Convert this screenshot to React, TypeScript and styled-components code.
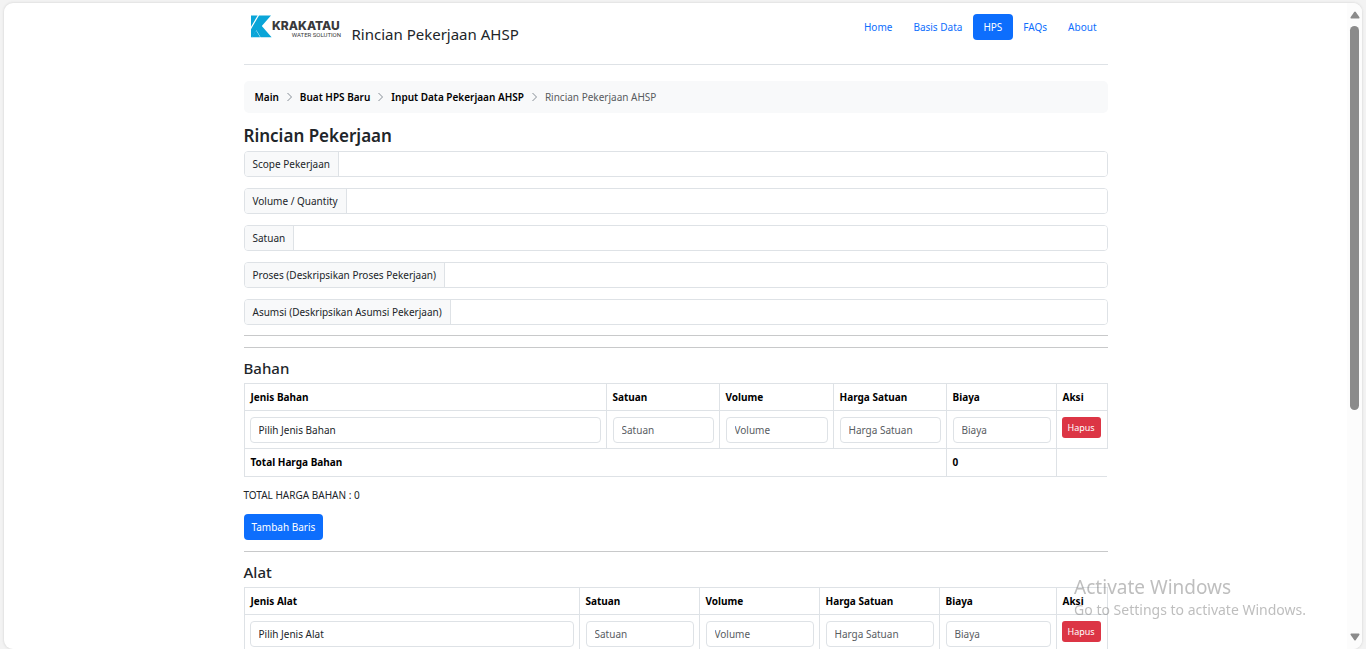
import React from "react";
import styled, { createGlobalStyle } from "styled-components";

const GlobalStyle = createGlobalStyle`
  *, *::before, *::after { box-sizing: border-box; }
  body {
    margin: 0;
    background: #f3f3f3;
    color: #212529;
    font-family: "Noto Sans", "Open Sans", sans-serif;
    font-size: 10px;
    line-height: 16px;
  }
  button, input, select { font: inherit; color: inherit; }
`;

const Frame = styled.div`
  display: flex;
  height: 100vh;
  padding: 3px 4px 0;
`;

const Viewport = styled.div`
  display: flex;
  flex: 1;
  overflow: hidden;
  background: #fff;
  border-radius: 9px;
  box-shadow: 0 0 2px 1px #e2e2e2;
`;

const Page = styled.div`
  flex: 1;
  min-width: 0;
  overflow: hidden;
`;

const Container = styled.div`
  max-width: 864px;
  margin: 0 auto;
`;

const ScrollTrack = styled.div`
  display: flex;
  flex-direction: column;
  align-items: center;
  gap: 7px;
  width: 15px;
  padding: 8px 0;
  background: #fcfcfc;
`;

const ScrollThumb = styled.div`
  width: 9px;
  height: 61%;
  margin-bottom: auto;
  border-radius: 5px;
  background: #8b8b8b;
`;

const Header = styled.header`
  display: flex;
  justify-content: space-between;
  align-items: flex-start;
  height: 62px;
  padding-top: 11px;
  border-bottom: 1px solid #dee2e6;
`;

const Brand = styled.a`
  display: flex;
  align-items: flex-start;
  gap: 10px;
  padding-left: 6px;
  color: #212529;
  text-decoration: none;
`;

const BrandTitle = styled.span`
  padding-top: 10px;
  font-size: 15px;
  line-height: 20px;
`;

const Nav = styled.nav`
  display: flex;
`;

const NavLink = styled.a<{ $active?: boolean }>`
  padding: 5px 11px 5px 10px;
  border-radius: 4px;
  background: ${(p) => (p.$active ? "#0d6efd" : "transparent")};
  color: ${(p) => (p.$active ? "#fff" : "#0d6efd")};
  text-decoration: none;
`;

const Breadcrumb = styled.nav`
  display: flex;
  align-items: center;
  gap: 8px;
  height: 32px;
  margin-top: 16px;
  padding: 0 11px;
  border-radius: 5px;
  background: #f8f9fa;
`;

const Crumb = styled.a`
  color: #000;
  font-weight: 600;
  text-decoration: none;
`;

const CurrentCrumb = styled.span`
  color: #585c5f;
`;

const PageTitle = styled.h1`
  margin: 11px 0 3px;
  font-size: 17px;
  font-weight: 600;
  line-height: 24px;
`;

const SectionTitle = styled.h2`
  margin: 11px 0 5px;
  font-size: 15px;
  font-weight: 500;
  line-height: 19px;
`;

const FieldList = styled.form`
  display: flex;
  flex-direction: column;
  gap: 11px;
`;

const Field = styled.div`
  display: flex;
  height: 26px;
  border: 1px solid #dee2e6;
  border-radius: 4px;
  overflow: hidden;
`;

const FieldLabel = styled.label`
  padding: 4px 8px;
  border-right: 1px solid #dee2e6;
  background: #f8f9fa;
  white-space: nowrap;
`;

const FieldInput = styled.input`
  flex: 1;
  min-width: 0;
  padding: 0 8px;
  border: 0;
  background: #fff;
`;

const Rule = styled.hr`
  height: 1px;
  margin: 10px 0 11px;
  border: 0;
  background: #c8c9ca;
`;

const DataTable = styled.table`
  width: 100%;
  table-layout: fixed;
  border-collapse: collapse;
  color: #000;

  tr {
    border: solid #dee2e6;
    border-width: 1px 0;
  }
  th, td {
    padding: 5px;
    border: solid #dee2e6;
    border-width: 0 1px;
    text-align: left;
    vertical-align: top;
  }
  th {
    padding-left: 6px;
    font-weight: 700;
  }
  td + td:not(:last-child) { padding-left: 6px; }
  tfoot th { padding-bottom: 6px; }
`;

const control = `
  display: block;
  width: 100%;
  height: 26px;
  padding: 0 8px;
  border: 1px solid #dee2e6;
  border-radius: 4px;
  background: #fff;
  color: #212529;
`;

const CellInput = styled.input`
  ${control}
  &::placeholder { color: #585c5f; opacity: 1; }
`;

const CellSelect = styled.select`
  ${control}
  appearance: none;
`;

const CellBox = styled.div`
  padding-top: 1px;
`;

const DeleteButton = styled.button`
  display: block;
  height: 21px;
  margin-top: 1px;
  padding: 0 6px;
  border: 0;
  border-radius: 3px;
  background: #dc3545;
  color: #fff;
  font-size: 9px;
  line-height: 20px;
`;

const Total = styled.p`
  margin: 10px 0 11px;
`;

const AddButton = styled.button`
  display: block;
  height: 26px;
  margin-bottom: 11px;
  padding: 0 8px;
  border: 0;
  border-radius: 4px;
  background: #0d6efd;
  color: #fff;
`;

const Watermark = styled.aside`
  position: fixed;
  right: 60px;
  bottom: 29px;
  color: rgba(125, 125, 125, 0.5);
  pointer-events: none;
`;

const WatermarkTitle = styled.div`
  font-size: 19px;
  line-height: 26px;
`;

const WatermarkText = styled.div`
  font-size: 14px;
  line-height: 20px;
`;

const Logo = () => (
  <svg width="92" height="26" viewBox="0 0 92 26" role="img" aria-label="Krakatau Water Solution">
    <path d="M1 1.4H7.6L1 12.8Z" fill="#0aa5d8" />
    <path d="M9 1.4H21L11.8 12L21.6 23.2H10.6L6.4 16.2L2.2 23.2H1V15.2Z" fill="#0aa5d8" />
    <path d="M6 16.2L10.2 23.2H1.8Z" fill="#0aa5d8" />
    <text x="22" y="16" fontFamily="Inter, sans-serif" fontSize="12" fontWeight="800" fill="#39393b">KRAKATAU</text>
    <text x="91" y="23" textAnchor="end" fontFamily="Roboto, sans-serif" fontSize="6" fill="#39393b">WATER SOLUTION</text>
  </svg>
);

const Chevron = () => (
  <svg width="5" height="10" viewBox="0 0 5 10" fill="none" stroke="#868e96" aria-hidden="true">
    <path d="M0.5 1L4.5 5L0.5 9" />
  </svg>
);

const Arrow = ({ down }: { down?: boolean }) => (
  <svg width="10" height="8" viewBox="0 0 10 8" fill="#8b8b8b" aria-hidden="true">
    <path d={down ? "M1 0.5H9Q10 1 9.3 2L5.8 7Q5 8 4.2 7L0.7 2Q0 1 1 0.5Z" : "M1 7.5H9Q10 7 9.3 6L5.8 1Q5 0 4.2 1L0.7 6Q0 7 1 7.5Z"} />
  </svg>
);

const navItems = ["Home", "Basis Data", "HPS", "FAQs", "About"];
const crumbs = ["Main", "Buat HPS Baru", "Input Data Pekerjaan AHSP"];
const fields = [
  { id: "scope", label: "Scope Pekerjaan" },
  { id: "volume", label: "Volume / Quantity" },
  { id: "satuan", label: "Satuan" },
  { id: "proses", label: "Proses (Deskripsikan Proses Pekerjaan)" },
  { id: "asumsi", label: "Asumsi (Deskripsikan Asumsi Pekerjaan)" },
];
const inputColumns = ["Satuan", "Volume", "Harga Satuan", "Biaya"];

type CostTableProps = { kind: string; widths: number[]; children?: React.ReactNode };

const CostTable = ({ kind, widths, children }: CostTableProps) => (
  <DataTable>
    <colgroup>
      <col />
      {widths.map((w, i) => (
        <col key={i} width={w} />
      ))}
    </colgroup>
    <thead>
      <tr>
        {[`Jenis ${kind}`, ...inputColumns, "Aksi"].map((c) => (
          <th key={c} scope="col">{c}</th>
        ))}
      </tr>
    </thead>
    <tbody>
      <tr>
        <td>
          <CellBox>
            <CellSelect aria-label={`Jenis ${kind}`}>
              <option>{`Pilih Jenis ${kind}`}</option>
            </CellSelect>
          </CellBox>
        </td>
        {inputColumns.map((c) => (
          <td key={c}>
            <CellBox>
              <CellInput placeholder={c} aria-label={c} />
            </CellBox>
          </td>
        ))}
        <td>
          <DeleteButton type="button">Hapus</DeleteButton>
        </td>
      </tr>
    </tbody>
    {children}
  </DataTable>
);

export default function App() {
  return (
    <>
      <GlobalStyle />
      <Frame>
        <Viewport>
          <Page>
            <Container>
              <Header>
                <Brand href="#">
                  <Logo />
                  <BrandTitle>Rincian Pekerjaan AHSP</BrandTitle>
                </Brand>
                <Nav>
                  {navItems.map((item) => (
                    <NavLink key={item} href="#" $active={item === "HPS"}>{item}</NavLink>
                  ))}
                </Nav>
              </Header>
              <Breadcrumb aria-label="breadcrumb">
                {crumbs.map((c) => (
                  <React.Fragment key={c}>
                    <Crumb href="#">{c}</Crumb>
                    <Chevron />
                  </React.Fragment>
                ))}
                <CurrentCrumb aria-current="page">Rincian Pekerjaan AHSP</CurrentCrumb>
              </Breadcrumb>
              <main>
                <PageTitle>Rincian Pekerjaan</PageTitle>
                <FieldList>
                  {fields.map((f) => (
                    <Field key={f.id}>
                      <FieldLabel htmlFor={f.id}>{f.label}</FieldLabel>
                      <FieldInput id={f.id} />
                    </Field>
                  ))}
                </FieldList>
                <Rule />
                <Rule />
                <SectionTitle>Bahan</SectionTitle>
                <CostTable kind="Bahan" widths={[113, 114, 113, 110, 51]}>
                  <tfoot>
                    <tr>
                      <th colSpan={4} scope="row">Total Harga Bahan</th>
                      <th>0</th>
                    </tr>
                  </tfoot>
                </CostTable>
                <Total>TOTAL HARGA BAHAN : 0</Total>
                <AddButton type="button">Tambah Baris</AddButton>
                <Rule />
                <SectionTitle>Alat</SectionTitle>
                <CostTable kind="Alat" widths={[120, 120, 120, 117, 51]} />
              </main>
            </Container>
          </Page>
          <ScrollTrack aria-hidden="true">
            <Arrow />
            <ScrollThumb />
            <Arrow down />
          </ScrollTrack>
        </Viewport>
      </Frame>
      <Watermark>
        <WatermarkTitle>Activate Windows</WatermarkTitle>
        <WatermarkText>Go to Settings to activate Windows.</WatermarkText>
      </Watermark>
    </>
  );
}
